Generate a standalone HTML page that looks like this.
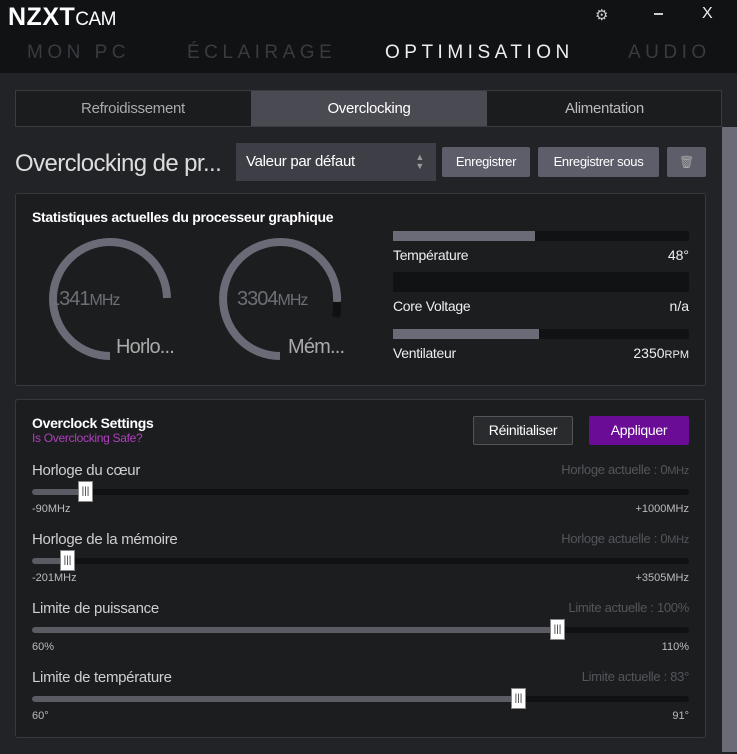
<!DOCTYPE html>
<html><head><meta charset="utf-8"><style>
*{margin:0;padding:0;box-sizing:border-box}
body{width:737px;height:754px;background:#222326;font-family:"Liberation Sans",sans-serif;color:#ddd;position:relative;overflow:hidden}
.a{position:absolute}
.hdr{left:0;top:0;width:737px;height:73px;background:#111214}
.nav{top:42px;font-size:19px;letter-spacing:4.5px;color:#3a3b40}
.panel{background:#1c1d1f;border:1px solid #37383b;border-radius:3px}
.btn{background:#5d5e6a;color:#fff;font-size:13px;letter-spacing:-0.3px;text-align:center;border-radius:2px}
.track{height:6px;background:#101113;border-radius:3px;left:32px;width:657px}
.fill{position:absolute;left:0;top:0;height:6px;background:#5a5b63;border-radius:3px}
.thumb{position:absolute;top:-8px;width:15px;height:21px;background:#fff;border:1px solid #888;font-size:10px;color:#333;text-align:center;line-height:19px;letter-spacing:0px}
.lbl{font-size:15px;color:#cfcfd2;letter-spacing:-0.3px}
.sm{font-size:11px;color:#bbb}
.cur{font-size:13px;color:#55565c;right:48px;letter-spacing:-0.3px}
</style></head><body>
<div class="a hdr"></div>
<div class="a" style="left:8px;top:3px;font-size:25px;font-weight:bold;color:#fff;letter-spacing:0.5px">NZXT<span style="font-weight:normal;font-size:19px;letter-spacing:-0.5px">CAM</span></div>
<div class="a" style="left:595px;top:6px;font-size:15px;color:#ccc">⚙</div>
<div class="a" style="left:654px;top:13px;width:9px;height:2px;background:#ccc"></div>
<div class="a" style="left:702px;top:5px;font-size:16px;color:#eee">X</div>
<div class="a nav" style="left:27px">MON PC</div>
<div class="a nav" style="left:187px">ÉCLAIRAGE</div>
<div class="a nav" style="left:385px;color:#eee">OPTIMISATION</div>
<div class="a nav" style="left:628px">AUDIO</div>

<div class="a" style="left:722px;top:127px;width:15px;height:625px;background:#6b6b78"></div>

<div class="a" style="left:15px;top:90px;width:707px;height:37px;border:1px solid #3a3b40;background:#1b1c1e"></div>
<div class="a" style="left:251px;top:91px;width:236px;height:35px;background:#4a4a53"></div>
<div class="a" style="left:15px;top:100px;width:236px;text-align:center;font-size:15px;color:#aaa;letter-spacing:-0.3px">Refroidissement</div>
<div class="a" style="left:251px;top:100px;width:236px;text-align:center;font-size:15px;color:#fff;letter-spacing:-0.3px">Overclocking</div>
<div class="a" style="left:487px;top:100px;width:235px;text-align:center;font-size:15px;color:#bbb;letter-spacing:-0.3px">Alimentation</div>

<div class="a" style="left:15px;top:150px;font-size:24px;color:#ddd;letter-spacing:-0.6px">Overclocking de pr...</div>
<div class="a" style="left:236px;top:143px;width:200px;height:38px;background:#3e3f46;font-size:15px;color:#fff;padding:10px 10px;letter-spacing:-0.3px">Valeur par défaut<span style="position:absolute;right:12px;top:10px;font-size:9px;line-height:9px;color:#999">▲<br>▼</span></div>
<div class="a btn" style="left:442px;top:147px;width:88px;height:30px;line-height:30px">Enregistrer</div>
<div class="a btn" style="left:538px;top:147px;width:121px;height:30px;line-height:30px">Enregistrer sous</div>
<div class="a btn" style="left:667px;top:147px;width:39px;height:30px;line-height:30px;font-size:12px;color:#aaa">🗑</div>

<div class="a panel" style="left:15px;top:193px;width:691px;height:193px"></div>
<div class="a" style="left:32px;top:209px;font-size:14px;font-weight:bold;color:#fff;letter-spacing:-0.3px">Statistiques actuelles du processeur graphique</div>
<svg class="a" style="left:40px;top:230px" width="330" height="140">
<path d="M70 126 A57 57 0 1 1 127 68" fill="none" stroke="#6b6b78" stroke-width="8"/>
<path d="M240 126 A57 57 0 1 1 297 72" fill="none" stroke="#6b6b78" stroke-width="8"/>
<path d="M297 72 A57 57 0 0 1 296 87" fill="none" stroke="#111" stroke-width="8"/>
</svg>
<div class="a" style="left:49px;top:288px;font-size:20px;color:#6e6e76;letter-spacing:-1px">1341<span style="font-size:16px">MHz</span></div>
<div class="a" style="left:237px;top:288px;font-size:20px;color:#6e6e76;letter-spacing:-1px">3304<span style="font-size:16px">MHz</span></div>
<div class="a" style="left:116px;top:336px;font-size:20px;color:#aaa;letter-spacing:-0.8px">Horlo...</div>
<div class="a" style="left:288px;top:336px;font-size:20px;color:#aaa;letter-spacing:-0.8px">Mém...</div>

<div class="a" style="left:393px;top:231px;width:296px;height:10px;background:#111214;border-radius:2px"><div style="width:142px;height:10px;background:#6b6b78"></div></div>
<div class="a" style="left:393px;top:247px;color:#eee;font-size:14px;letter-spacing:-0.3px">Température</div>
<div class="a" style="right:48px;top:247px;font-size:14px;color:#eee">48°</div>
<div class="a" style="left:393px;top:272px;width:296px;height:20px;background:#111214;border-radius:2px"></div>
<div class="a" style="left:393px;top:298px;color:#eee;font-size:14px;letter-spacing:-0.3px">Core Voltage</div>
<div class="a" style="right:48px;top:298px;font-size:14px;color:#eee">n/a</div>
<div class="a" style="left:393px;top:329px;width:296px;height:10px;background:#111214;border-radius:2px"><div style="width:146px;height:10px;background:#6b6b78"></div></div>
<div class="a" style="left:393px;top:345px;color:#eee;font-size:14px;letter-spacing:-0.3px">Ventilateur</div>
<div class="a" style="right:48px;top:345px;font-size:14px;color:#eee">2350<span style="font-size:11px">RPM</span></div>

<div class="a panel" style="left:15px;top:399px;width:691px;height:339px"></div>
<div class="a" style="left:32px;top:415px;font-size:14px;font-weight:bold;color:#fff;letter-spacing:-0.3px">Overclock Settings</div>
<div class="a" style="left:32px;top:431px;font-size:12px;color:#b03fc0;letter-spacing:-0.3px">Is Overclocking Safe?</div>
<div class="a" style="left:473px;top:416px;width:100px;height:29px;border:1px solid #555;background:#2a2b2e;border-radius:2px;text-align:center;line-height:27px;font-size:14px;color:#fff;letter-spacing:-0.3px">Réinitialiser</div>
<div class="a" style="left:589px;top:416px;width:100px;height:29px;background:#6a0c96;border-radius:2px;text-align:center;line-height:29px;font-size:14px;color:#fff;letter-spacing:-0.3px">Appliquer</div>

<div class="a lbl" style="left:32px;top:462px">Horloge du cœur</div>
<div class="a cur" style="top:462px">Horloge actuelle : 0<span style="font-size:11px">MHz</span></div>
<div class="a track" style="top:489px"><div class="fill" style="width:54px"></div><div class="thumb" style="left:46px">|||</div></div>
<div class="a sm" style="left:32px;top:503px">-90MHz</div>
<div class="a sm" style="right:48px;top:503px">+1000MHz</div>

<div class="a lbl" style="left:32px;top:531px">Horloge de la mémoire</div>
<div class="a cur" style="top:531px">Horloge actuelle : 0<span style="font-size:11px">MHz</span></div>
<div class="a track" style="top:558px"><div class="fill" style="width:36px"></div><div class="thumb" style="left:28px">|||</div></div>
<div class="a sm" style="left:32px;top:572px">-201MHz</div>
<div class="a sm" style="right:48px;top:572px">+3505MHz</div>

<div class="a lbl" style="left:32px;top:600px">Limite de puissance</div>
<div class="a cur" style="top:600px">Limite actuelle : 100%</div>
<div class="a track" style="top:627px"><div class="fill" style="width:526px"></div><div class="thumb" style="left:518px">|||</div></div>
<div class="a sm" style="left:32px;top:641px">60%</div>
<div class="a sm" style="right:48px;top:641px">110%</div>

<div class="a lbl" style="left:32px;top:669px">Limite de température</div>
<div class="a cur" style="top:669px">Limite actuelle : 83°</div>
<div class="a track" style="top:696px"><div class="fill" style="width:487px"></div><div class="thumb" style="left:479px">|||</div></div>
<div class="a sm" style="left:32px;top:710px">60°</div>
<div class="a sm" style="right:48px;top:710px">91°</div>
</body></html>
